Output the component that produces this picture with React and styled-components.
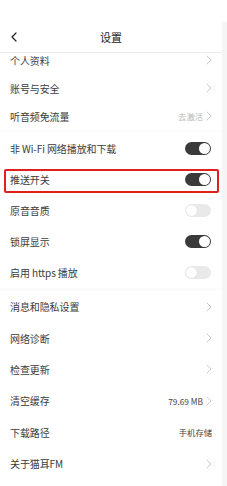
import React from "react";
import styled, { createGlobalStyle } from "styled-components";

const GlobalStyle = createGlobalStyle`
  html, body {
    margin: 0;
    padding: 0;
    background: #ffffff;
  }
  body {
    font-family: "Noto Sans CJK SC", "Noto Sans", sans-serif;
  }
  * {
    box-sizing: border-box;
  }
`;

const groups = [
  {
    rowHeight: 28,
    rows: [
      { label: "个人资料", arrow: true },
      { label: "账号与安全", arrow: true },
      { label: "听音频免流量", value: "去激活", muted: true, arrow: true },
    ],
  },
  {
    rowHeight: 31,
    rows: [
      { label: "非 Wi-Fi 网络播放和下载", toggle: true, on: true },
      { label: "推送开关", toggle: true, on: true, marked: true },
      { label: "原音音质", toggle: true, on: false },
      { label: "锁屏显示", toggle: true, on: true },
      { label: "启用 https 播放", toggle: true, on: false },
    ],
  },
  {
    rowHeight: 31.4,
    rows: [
      { label: "消息和隐私设置", arrow: true },
      { label: "网络诊断", arrow: true },
      { label: "检查更新", arrow: true },
      { label: "清空缓存", value: "79.69 MB", arrow: true },
      { label: "下载路径", value: "手机存储" },
      { label: "关于猫耳FM", arrow: true },
    ],
  },
];

function Chevron({ left }) {
  return (
    <svg width="6" height="10" viewBox="0 0 6 10">
      <path
        d={left ? "M5 1 L1 5 L5 9" : "M1 1 L5 5 L1 9"}
        fill="none"
        stroke={left ? "#222" : "#c4c4c4"}
        strokeWidth={left ? "1.2" : "0.9"}
        strokeLinecap="round"
        strokeLinejoin="round"
      />
    </svg>
  );
}

function App() {
  return (
    <Page>
      <GlobalStyle />
      <StatusBar />
      <Body>
        <Main>
          <Header>
            <BackBtn>
              <Chevron left />
            </BackBtn>
            <Title>设置</Title>
          </Header>
          <Viewport>
            <List>
              {groups.map((group, gi) => (
                <Group key={gi}>
                  {group.rows.map(row => (
                    <Row key={row.label} $h={group.rowHeight}>
                      <Label>{row.label}</Label>
                      <Right>
                        {row.value && <Value $muted={row.muted}>{row.value}</Value>}
                        {row.arrow && <Chevron />}
                        {row.toggle && (
                          <Toggle $on={row.on}>
                            <Knob $on={row.on} />
                          </Toggle>
                        )}
                      </Right>
                      {row.marked && <Mark />}
                    </Row>
                  ))}
                </Group>
              ))}
            </List>
          </Viewport>
        </Main>
        <Edge />
      </Body>
    </Page>
  );
}

export default App;

const Page = styled.div`
  width: 227px;
  height: 486px;
  display: flex;
  flex-direction: column;
  overflow: hidden;
  background: #fff;
`;

const StatusBar = styled.div`
  height: 22px;
  background: #fff;
`;

const Body = styled.div`
  flex: 1;
  display: flex;
  min-height: 0;
`;

const Main = styled.div`
  flex: 1;
  display: flex;
  flex-direction: column;
  min-width: 0;
`;

const Edge = styled.div`
  width: 5px;
  background: #f5f5f5;
`;

const Header = styled.div`
  position: relative;
  z-index: 1;
  height: 31px;
  display: flex;
  align-items: center;
  justify-content: center;
  background: #fff;
  border-bottom: 1px solid #ececec;
`;

const BackBtn = styled.div`
  position: absolute;
  left: 11px;
  top: 10px;
  display: flex;
`;

const Title = styled.div`
  font-size: 11px;
  color: #222;
`;

const Viewport = styled.div`
  flex: 1;
  overflow: hidden;
`;

const List = styled.div`
  margin-top: -7px;
  display: flex;
  flex-direction: column;
  gap: 3px;
  background: #fcfcfc;
`;

const Group = styled.div`
  background: #fff;
  display: flex;
  flex-direction: column;
`;

const Row = styled.div`
  position: relative;
  height: ${p => p.$h}px;
  display: flex;
  align-items: center;
  justify-content: space-between;
  padding: 0 10px 0 10px;
`;

const Label = styled.span`
  font-size: 10px;
  color: #3c3c3c;
  letter-spacing: -0.1px;
`;

const Right = styled.div`
  display: flex;
  align-items: center;
  gap: 3px;
`;

const Value = styled.span`
  font-size: 8.3px;
  color: ${p => (p.$muted ? "#b8b8b8" : "#444")};
`;

const Toggle = styled.div`
  width: 26px;
  height: 13px;
  border-radius: 7px;
  background: ${p => (p.$on ? "#3a3a3a" : "#e9e9e9")};
  display: flex;
  align-items: center;
  justify-content: ${p => (p.$on ? "flex-end" : "flex-start")};
  padding: 1px;
  margin-right: 1px;
`;

const Knob = styled.div`
  width: 11px;
  height: 11px;
  border-radius: 50%;
  background: #fff;
  box-shadow: ${p => (p.$on ? "none" : "0 0 1px rgba(0,0,0,0.15)")};
`;

const Mark = styled.div`
  position: absolute;
  left: 4px;
  right: 3px;
  top: 5px;
  height: 24px;
  border: 2px solid #e0201c;
  border-radius: 2px;
  pointer-events: none;
`;
